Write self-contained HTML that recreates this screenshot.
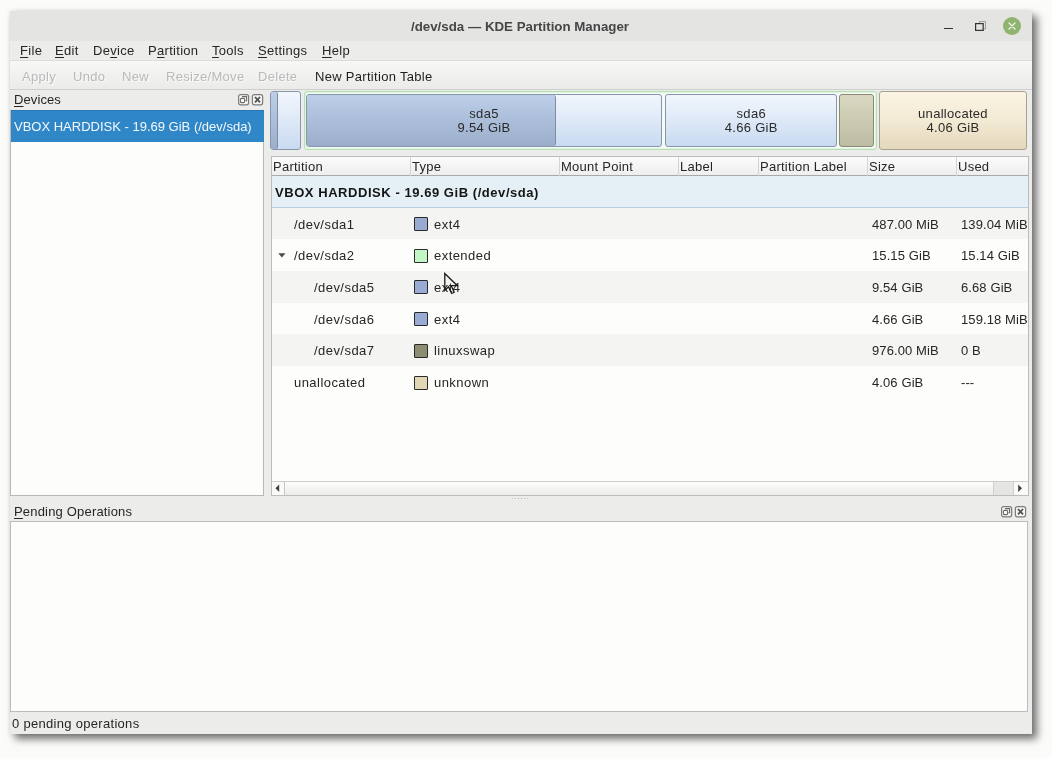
<!DOCTYPE html><html><head><meta charset="utf-8"><style>
*{margin:0;padding:0;box-sizing:border-box}
html,body{width:1052px;height:758px;overflow:hidden;background:#fbfbfa;font-family:"Liberation Sans",sans-serif;font-size:13px;color:#262626;letter-spacing:0.3px}
.a,.hd,.pl,.cell{position:absolute;white-space:nowrap;will-change:transform}
.u{text-decoration:underline;text-underline-offset:2px;text-decoration-thickness:1px}
.dis{color:#b9b9b9;text-shadow:1px 1px 0 #fafafa}
.pb{position:absolute;border:1px solid #8796ac;border-radius:3px;overflow:hidden}
.un{background:linear-gradient(#f2f6fc,#e6eef9 30%,#c9daf1)}
.us{background:linear-gradient(#bccee8,#adc0db 45%,#9badca)}
.pl{position:absolute;text-align:center;line-height:13.6px;color:#2a2a2a}
.sw{position:absolute;width:14px;height:14px;border:1.5px solid #2a2a2a;border-radius:1px}
.cell{position:absolute;line-height:14px;letter-spacing:0.45px}
.hd{position:absolute;top:160px;line-height:14px}
.cd{position:absolute;top:157px;height:19px;width:1px;background:#d4d4d4}
</style></head><body>
<div class="a" style="left:10px;top:11px;width:1022px;height:723px;background:#ececea;box-shadow:5px 5px 8px rgba(0,0,0,0.55),0 0 5px rgba(0,0,0,0.1)"></div>
<div class="a" style="left:10px;top:11px;width:1022px;height:30px;background:#e4e4e2"></div>
<div class="a" style="left:410.5px;top:19px;font-weight:bold;font-size:13.3px;letter-spacing:0;color:#464646">/dev/sda — KDE Partition Manager</div>
<div class="a" style="left:944px;top:27.7px;width:8.5px;height:1.4px;background:#333"></div>
<svg class="a" style="left:972px;top:18px" width="18" height="16"><path d="M7.5 5V3.5H13.5V11H11.5" fill="none" stroke="#a0a0a0" stroke-width="1"/><rect x="3.6" y="5.6" width="7.6" height="6.8" fill="none" stroke="#333" stroke-width="1.2"/></svg>
<div class="a" style="left:1003px;top:17px;width:18px;height:18px;border-radius:50%;background:#8fb470"></div>
<svg class="a" style="left:1003px;top:17px" width="18" height="18"><path d="M6 6L12 12M12 6L6 12" stroke="#eef6e8" stroke-width="1.3" stroke-linecap="round"/></svg>
<div class="a" style="left:20px;top:43px"><span class="u">F</span>ile</div>
<div class="a" style="left:55px;top:43px"><span class="u">E</span>dit</div>
<div class="a" style="left:92.5px;top:43px">De<span class="u">v</span>ice</div>
<div class="a" style="left:147.5px;top:43px">P<span class="u">a</span>rtition</div>
<div class="a" style="left:212px;top:43px"><span class="u">T</span>ools</div>
<div class="a" style="left:258px;top:43px"><span class="u">S</span>ettings</div>
<div class="a" style="left:322px;top:43px"><span class="u">H</span>elp</div>
<div class="a" style="left:10px;top:60px;width:1022px;height:1px;background:#dcdcda"></div><div class="a" style="left:10px;top:61px;width:1022px;height:27.5px;background:linear-gradient(#f8f8f6,#f2f2f0 40%,#ebebe9)"></div>
<div class="a dis" style="left:22px;top:69px">Apply</div>
<div class="a dis" style="left:73px;top:69px">Undo</div>
<div class="a dis" style="left:122px;top:69px">New</div>
<div class="a dis" style="left:165.5px;top:69px">Resize/Move</div>
<div class="a dis" style="left:257.5px;top:69px">Delete</div>
<div class="a" style="left:315px;top:69px;color:#1e1e1e">New Partition Table</div>
<div class="a" style="left:10px;top:88.5px;width:1022px;height:1px;background:#cfcfcd"></div>
<div class="a" style="left:14px;top:92px;letter-spacing:0.1px"><span class="u">D</span>evices</div>
<svg class="a" style="left:237.6px;top:94.2px" width="26" height="12"><rect x="0.6" y="0.6" width="10" height="10.2" rx="2" fill="#f6f6f4" stroke="#7c7c7c" stroke-width="1.2"/><path d="M4.6 3.2V2.6H8.6V6.6H7.6" fill="none" stroke="#6a6a6a" stroke-width="1.1"/><rect x="2.4" y="4.4" width="4.2" height="4.2" rx="1" fill="#fafafa" stroke="#6a6a6a" stroke-width="1.1"/><rect x="14.4" y="0.6" width="10.2" height="10.2" rx="2" fill="#f6f6f4" stroke="#7c7c7c" stroke-width="1.2"/><path d="M17 3L22 8.4M22 3L17 8.4" stroke="#505050" stroke-width="1.8"/></svg>
<div class="a" style="left:10px;top:110px;width:254px;height:386px;background:#fdfdfb;border:1px solid #b8b8b8;border-top:none"></div>
<div class="a" style="left:11px;top:110px;width:253px;height:32px;background:#2f87c8;border-top:1px solid #2a76b4"></div>
<div class="a" style="left:14px;top:119px;color:#f4f8fc;letter-spacing:0px">VBOX HARDDISK - 19.69 GiB (/dev/sda)</div>
<div class="pb un" style="left:270px;top:90.5px;width:30.8px;height:59px"><div class="a us" style="left:0;top:0;width:7.2px;height:100%;border-right:1px solid #7d8ca4;border-radius:0 2px 2px 0"></div></div>
<div class="a" style="left:304px;top:91px;width:572.5px;height:58.5px;border:1px solid #b4e0b4;border-radius:3px;background:#f4faf4;box-shadow:inset 0 0 0 1px #e2f3e2"></div>
<div class="pb un" style="left:306px;top:93.5px;width:356px;height:53px"><div class="a us" style="left:0;top:0;width:248.5px;height:100%;border-right:1px solid #7d8ca4;border-radius:0 3px 3px 0"></div></div>
<div class="pl" style="left:306px;top:106.5px;width:356px">sda5<br>9.54 GiB</div>
<div class="pb un" style="left:664.5px;top:93.5px;width:172.5px;height:53px"></div>
<div class="pl" style="left:664.5px;top:106.5px;width:172.5px">sda6<br>4.66 GiB</div>
<div class="pb" style="left:839px;top:94px;width:35px;height:52.5px;border-color:#8a8a74;background:linear-gradient(#d9d9c3,#cbcbb1 50%,#bdbda3)"></div>
<div class="pb" style="left:879px;top:91px;width:148px;height:58.5px;border-color:#a8a090;background:linear-gradient(#fbf4e2,#f3ead4 50%,#e4d8bc)"></div>
<div class="pl" style="left:879px;top:106.5px;width:148px">unallocated<br>4.06 GiB</div>
<div class="a" style="left:270.5px;top:156px;width:757.5px;height:340px;background:#fdfdfb;border:1px solid #bcbcbc"></div>
<div class="a" style="left:271.5px;top:157px;width:755.5px;height:19px;background:linear-gradient(#fbfbfb,#eeeeee);border-bottom:1px solid #a9a9a9"></div>
<div class="hd" style="left:273.3px;letter-spacing:0.25px">Partition</div>
<div class="cd" style="left:410px"></div>
<div class="hd" style="left:412.3px;letter-spacing:0.25px">Type</div>
<div class="cd" style="left:559px"></div>
<div class="hd" style="left:561.3px;letter-spacing:0.25px">Mount Point</div>
<div class="cd" style="left:678px"></div>
<div class="hd" style="left:680.3px;letter-spacing:0.25px">Label</div>
<div class="cd" style="left:758px"></div>
<div class="hd" style="left:760.3px;letter-spacing:0.25px">Partition Label</div>
<div class="cd" style="left:866.5px"></div>
<div class="hd" style="left:868.8px;letter-spacing:0.25px">Size</div>
<div class="cd" style="left:956px"></div>
<div class="hd" style="left:958.3px;letter-spacing:0.25px">Used</div>
<div class="a" style="left:271.5px;top:176px;width:755.5px;height:31.6px;background:#e4f0f6;border-bottom:1px solid #b9cfdf"></div>
<div class="a" style="left:274.5px;top:185px;font-weight:bold;letter-spacing:0.55px;color:#151515">VBOX HARDDISK - 19.69 GiB (/dev/sda)</div>
<div class="a" style="left:271.5px;top:207.60px;width:755.5px;height:31.7px;background:#f4f4f2"></div>
<div class="cell a" style="left:294px;top:217.60px">/dev/sda1</div>
<div class="sw" style="left:414px;top:217.00px;background:#97abd3"></div>
<div class="cell a" style="left:433.5px;top:217.60px">ext4</div>
<div class="cell a" style="left:871.5px;top:217.60px;letter-spacing:0.1px">487.00 MiB</div>
<div class="a" style="left:960.5px;top:217.60px;width:66.5px;overflow:hidden;line-height:14px;letter-spacing:0.1px">139.04 MiB</div>
<div class="a" style="left:271.5px;top:239.30px;width:755.5px;height:31.7px;background:#fdfdfb"></div>
<div class="cell a" style="left:294px;top:249.30px">/dev/sda2</div>
<svg class="a" style="left:277.5px;top:252.30px" width="8" height="7"><path d="M0.3 1.3H7.5L3.9 5.6Z" fill="#4a4a4a"/></svg>
<div class="sw" style="left:414px;top:248.70px;background:#c2f6c4"></div>
<div class="cell a" style="left:433.5px;top:249.30px">extended</div>
<div class="cell a" style="left:871.5px;top:249.30px;letter-spacing:0.1px">15.15 GiB</div>
<div class="a" style="left:960.5px;top:249.30px;width:66.5px;overflow:hidden;line-height:14px;letter-spacing:0.1px">15.14 GiB</div>
<div class="a" style="left:271.5px;top:271.00px;width:755.5px;height:31.7px;background:#f4f4f2"></div>
<div class="cell a" style="left:314px;top:281.00px">/dev/sda5</div>
<div class="sw" style="left:414px;top:280.40px;background:#97abd3"></div>
<div class="cell a" style="left:433.5px;top:281.00px">ext4</div>
<div class="cell a" style="left:871.5px;top:281.00px;letter-spacing:0.1px">9.54 GiB</div>
<div class="a" style="left:960.5px;top:281.00px;width:66.5px;overflow:hidden;line-height:14px;letter-spacing:0.1px">6.68 GiB</div>
<div class="a" style="left:271.5px;top:302.70px;width:755.5px;height:31.7px;background:#fdfdfb"></div>
<div class="cell a" style="left:314px;top:312.70px">/dev/sda6</div>
<div class="sw" style="left:414px;top:312.10px;background:#97abd3"></div>
<div class="cell a" style="left:433.5px;top:312.70px">ext4</div>
<div class="cell a" style="left:871.5px;top:312.70px;letter-spacing:0.1px">4.66 GiB</div>
<div class="a" style="left:960.5px;top:312.70px;width:66.5px;overflow:hidden;line-height:14px;letter-spacing:0.1px">159.18 MiB</div>
<div class="a" style="left:271.5px;top:334.40px;width:755.5px;height:31.7px;background:#f4f4f2"></div>
<div class="cell a" style="left:314px;top:344.40px">/dev/sda7</div>
<div class="sw" style="left:414px;top:343.80px;background:#8d8d72"></div>
<div class="cell a" style="left:433.5px;top:344.40px">linuxswap</div>
<div class="cell a" style="left:871.5px;top:344.40px;letter-spacing:0.1px">976.00 MiB</div>
<div class="a" style="left:960.5px;top:344.40px;width:66.5px;overflow:hidden;line-height:14px;letter-spacing:0.1px">0 B</div>
<div class="a" style="left:271.5px;top:366.10px;width:755.5px;height:31.7px;background:#fdfdfb"></div>
<div class="cell a" style="left:294px;top:376.10px">unallocated</div>
<div class="sw" style="left:414px;top:375.50px;background:#e2d7b4"></div>
<div class="cell a" style="left:433.5px;top:376.10px">unknown</div>
<div class="cell a" style="left:871.5px;top:376.10px;letter-spacing:0.1px">4.06 GiB</div>
<div class="a" style="left:960.5px;top:376.10px;width:66.5px;overflow:hidden;line-height:14px;letter-spacing:0.1px">---</div>
<svg class="a" style="left:443.3px;top:271.6px" width="20" height="24"><path d="M1.8 1.5V18.5L5.5 14.8L8.6 21.5L11.2 20.3L8.2 13.7H14.3Z" fill="none" stroke="#1a1a1a" stroke-width="1.3" stroke-linejoin="miter"/></svg>
<div class="a" style="left:271.5px;top:481.3px;width:755.5px;height:14px;background:#fafaf9;border-top:1px solid #cdcdcd"></div>
<div class="a" style="left:284px;top:482.3px;width:710px;height:13px;background:linear-gradient(#fdfdfc,#f4f4f3 50%,#ededec);border-left:1px solid #c6c6c6;border-right:1px solid #cfcfcf"></div>
<div class="a" style="left:994px;top:482.3px;width:19px;height:13px;background:#e5e5e4"></div>
<svg class="a" style="left:274px;top:484px" width="8" height="9"><path d="M5.2 0.6V8L1.4 4.3Z" fill="#404040"/></svg>
<svg class="a" style="left:1017px;top:484px" width="8" height="9"><path d="M1.2 0.6V8L5 4.3Z" fill="#404040"/></svg>
<div class="a" style="left:1013px;top:482.3px;width:1px;height:13px;background:#d0d0d0"></div>
<div class="a" style="left:512px;top:498px;width:17px;height:1px;background:repeating-linear-gradient(90deg,#bdbdbd 0 1px,transparent 1px 3px)"></div>
<div class="a" style="left:14px;top:504px;letter-spacing:0.18px"><span class="u">P</span>ending Operations</div>
<svg class="a" style="left:1001px;top:506px" width="26" height="12"><rect x="0.6" y="0.6" width="10" height="10.2" rx="2" fill="#f6f6f4" stroke="#7c7c7c" stroke-width="1.2"/><path d="M4.6 3.2V2.6H8.6V6.6H7.6" fill="none" stroke="#6a6a6a" stroke-width="1.1"/><rect x="2.4" y="4.4" width="4.2" height="4.2" rx="1" fill="#fafafa" stroke="#6a6a6a" stroke-width="1.1"/><rect x="14.4" y="0.6" width="10.2" height="10.2" rx="2" fill="#f6f6f4" stroke="#7c7c7c" stroke-width="1.2"/><path d="M17 3L22 8.4M22 3L17 8.4" stroke="#505050" stroke-width="1.8"/></svg>
<div class="a" style="left:10px;top:521px;width:1018px;height:190.5px;background:#fdfdfb;border:1px solid #bcbcbc"></div>
<div class="a" style="left:12.3px;top:716px;letter-spacing:0.3px">0 pending operations</div>
</body></html>
